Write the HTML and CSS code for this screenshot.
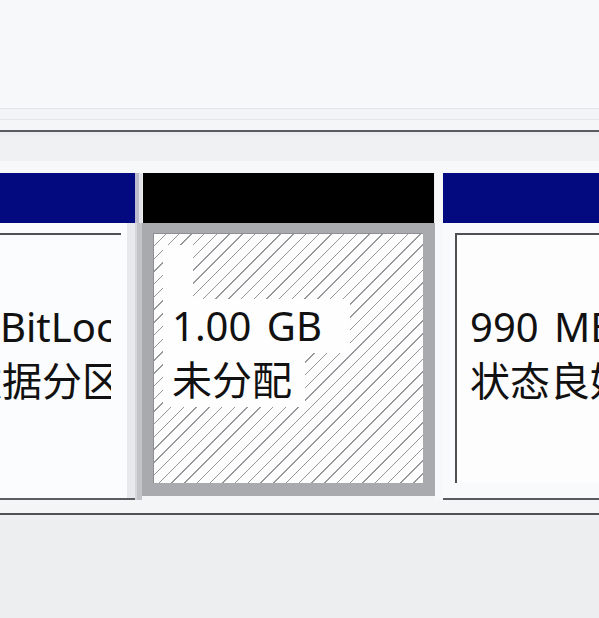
FILE: index.html
```html
<!DOCTYPE html>
<html lang="zh-CN">
<head>
    <meta charset="UTF-8">
    <title>磁盘管理</title>
    <link rel="stylesheet" href="styles.css">
</head>
<body>
    <!-- toolbar / header strips above the disk row -->
    <div class="top"></div>
    <div class="band band-a"></div>
    <div class="rule"></div>
    <div class="band band-b"></div>
    <div class="band band-c"></div>

    <!-- Disk row -->
    <div class="disk">
        <div class="part part-left">
            <div class="part-head head-blue"></div>
            <div class="part-body">
                <div class="part-inner">
                    <div class="label">
                        <div class="line clip-1">(BitLocker 已加密)</div>
                        <div class="line clip-2">数据分区)</div>
                    </div>
                </div>
            </div>
        </div>

        <div class="sep">
            <div class="sep-top"></div>
            <div class="sep-bottom"></div>
        </div>

        <div class="part part-free">
            <div class="part-head head-black"></div>
            <div class="part-body">
                <div class="hatch">
                    <div class="line blank">&nbsp;</div>
                    <div class="line size">1.00 GB</div>
                    <div class="line state">未分配</div>
                </div>
            </div>
        </div>

        <div class="gap"></div>

        <div class="part part-right">
            <div class="part-head head-blue"></div>
            <div class="part-body">
                <div class="part-inner">
                    <div class="label">
                        <div class="line">990 MB NTFS</div>
                        <div class="line">状态良好 (恢复分区)</div>
                    </div>
                </div>
            </div>
        </div>
    </div>

    <div class="band band-d"></div>
    <div class="rule rule-low"></div>
    <div class="bottom"></div>
</body>
</html>
```

FILE: styles.css
```css
* {
    margin: 0;
    padding: 0;
    box-sizing: border-box;
}

body {
    width: 599px;
    height: 618px;
    overflow: hidden;
    background: #eceef0;
    font-family: "Noto Sans", "Noto Sans CJK SC", sans-serif;
    font-size: 40px;
    color: #111;
}

/* Strips above the disk */
.top {
    height: 108px;
    background: #f7f8fa;
}

.band-a {
    height: 22px;
    border-top: 1px solid #e2e3e6;
    background: linear-gradient(#f3f4f6 0 10px, #e4e5e8 10px 11px, #f5f6f8 11px);
}

.rule {
    height: 2px;
    background: #5b5c5f;
}

.band-b {
    height: 29px;
    background: linear-gradient(#e9eaec, #f0f1f3 4px);
}

.band-c {
    height: 12px;
    background: #f7f8fa;
}

.band-d {
    height: 13px;
    background: #f4f5f7;
}

.rule-low {
    background: #505154;
}

.bottom {
    height: 104px;
    background: #eceef0;
}

/* Disk row */
.disk {
    display: flex;
    height: 327px;
    overflow: hidden;
}

.part {
    display: flex;
    flex-direction: column;
    flex-shrink: 0;
    min-width: 0;
}

.part-head {
    height: 50px;
    flex-shrink: 0;
}

.head-blue {
    background: #03097f;
}

.head-black {
    background: #000;
    margin: 0 1px;
}

.part-body {
    flex: 1;
    min-width: 0;
}

.line {
    height: 54px;
    line-height: 54px;
    white-space: nowrap;
    word-spacing: 5px;
}

/* Left partition */
.part-left {
    width: 135px;
}

.part-left .part-body {
    background: linear-gradient(90deg, #fbfcfd 0 127px, #e8e9ec 127px);
    border-bottom: 2px solid #5c5d60;
    padding-top: 10px;
}

.part-left .part-inner {
    width: 121px;
    height: 254px;
    border-top: 2px solid #4f5053;
    background: #fbfcfd;
}

.part-left .label {
    width: 111px;
    overflow: hidden;
    padding-top: 65px;
}

.clip-1 {
    margin-left: -12px;
}

.clip-2 {
    margin-left: -38px;
}

.sep {
    width: 7px;
    flex-shrink: 0;
    display: flex;
    flex-direction: column;
}

.sep-top {
    height: 50px;
    background: linear-gradient(90deg, #bcbbce 0 4px, #e2e3e8 4px);
}

.sep-bottom {
    flex: 1;
    background: linear-gradient(90deg, #d6d7da 0 2px, #c3c4c7 2px);
}

/* Unallocated, selected */
.part-free {
    width: 293px;
}

.part-free .part-body {
    background: linear-gradient(#a9aaad 0 273px, #f4f5f7 273px);
    padding: 10px 12px 0 11px;
}

.hatch {
    height: 250px;
    border-top: 1px solid #8e8f92;
    border-left: 1px solid #8e8f92;
    background-color: #fdfdfe;
    background-image: repeating-linear-gradient(135deg, transparent 0 8px, #96979a 8px 9px);
    padding: 11px 0 0 9px;
}

.hatch .line {
    width: fit-content;
    background: #fefefe;
    padding: 0 13px 0 9px;
}

.hatch .blank {
    width: 30px;
    padding: 0;
}

.hatch .size {
    padding-right: 28px;
}

.gap {
    width: 8px;
    flex-shrink: 0;
    background: #f7f8fa;
}

/* Right partition */
.part-right {
    flex: 1 1 0;
}

.part-right .part-body {
    background: #f9fafb;
    border-bottom: 2px solid #5a5b5e;
    padding: 10px 0 0 12px;
    overflow: hidden;
}

.part-right .part-inner {
    height: 250px;
    border-top: 2px solid #4f5053;
    border-left: 2px solid #4f5053;
    background: #fdfdfe;
    padding: 65px 0 0 13px;
}
```
